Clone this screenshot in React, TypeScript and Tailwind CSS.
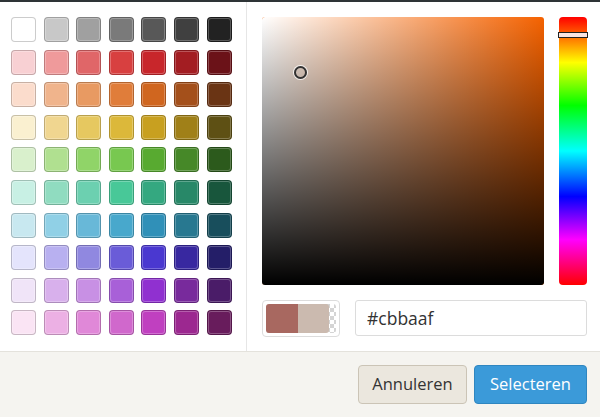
import React from 'react'

const SWATCHES: string[][] = [
	['#ffffff', '#c8c8c8', '#a0a0a0', '#7a7a7a', '#585858', '#404040', '#222222'],
	['#f8d0d3', '#ef9a9b', '#e06668', '#d84040', '#c8262b', '#a31d22', '#6b1218'],
	['#fbdccc', '#f0b48c', '#e89a62', '#e07d3a', '#d0661f', '#a4501b', '#6a3414'],
	['#faf0d0', '#f0d690', '#e6c860', '#dcb83a', '#c8a020', '#a08018', '#5e5014'],
	['#d9f0cc', '#b0e090', '#90d468', '#78c850', '#58aa30', '#468828', '#2c5a1c'],
	['#c8f0e4', '#90dcc0', '#6cd0b0', '#48c898', '#34a880', '#288868', '#18563c'],
	['#c8e8f0', '#90d0e6', '#68b8d8', '#48a8cc', '#3090b8', '#287890', '#184e5c'],
	['#e4e4fc', '#b8b0f0', '#9088e0', '#6a5cd8', '#4a38d0', '#3828a0', '#241e68'],
	['#f0e4f8', '#d8b0ec', '#c890e4', '#a860d8', '#9030d0', '#782a9c', '#4a1c68'],
	['#fae4f4', '#ecb0e4', '#e088d8', '#d068cc', '#c040c0', '#9c2890', '#681c5c']
]

const Palette = () => (
	<div className="w-[247px] shrink-0 border-r border-[#e6e6e6] pl-[11px] pt-[15px]">
		<div className="grid grid-cols-[repeat(7,25px)] gap-[7.6px]">
			{SWATCHES.flat().map((c, i) => (
				<div
					key={i}
					className="h-[25px] w-[25px] rounded-[4px] border border-black/20 shadow-[inset_0_0_0_1px_rgba(255,255,255,0.25)]"
					style={{ backgroundColor: c }}
				/>
			))}
		</div>
	</div>
)

const Picker = () => (
	<div className="flex min-w-0 flex-1 flex-col pl-[15px] pr-[13px] pt-[15px]">
		<div className="flex gap-[15px]">
			{/* verzadiging / helderheid */}
			<div className="relative h-[268px] w-[282px] overflow-hidden rounded-[3px] bg-[hsl(24,100%,48%)]">
				<div className="absolute inset-0 bg-gradient-to-r from-white to-transparent" />
				<div className="absolute inset-0 bg-gradient-to-b from-transparent to-black" />
				<div className="absolute left-[32px] top-[49px] h-[13px] w-[13px] rounded-full border-2 border-[#333] shadow-[0_0_0_1px_rgba(255,255,255,0.8)]" />
			</div>
			{/* tint */}
			<div className="relative h-[268px] w-[28px] rounded-[4px] bg-[linear-gradient(to_bottom,#ff0000_0%,#ffff00_17%,#00ff00_33%,#00ffff_50%,#0000ff_67%,#ff00ff_83%,#ff0000_100%)]">
				<div className="absolute -left-[1px] -right-[1px] top-[15px] h-[6px] border border-[#222] bg-[#f8e4e2]" />
			</div>
		</div>
		<div className="mt-[15px] flex gap-[15px]">
			<div className="h-[37px] w-[78px] shrink-0 rounded-[4px] border border-[#dcdcdc] p-[3px]">
				<div className="flex h-full w-full rounded-[3px] bg-[repeating-conic-gradient(#d4d4d4_0_25%,#ffffff_0_50%)] bg-[length:8px_8px]">
					<div className="w-[32px] rounded-l-[3px] bg-[#a86860]" />
					<div className="w-[31px] rounded-r-[3px] bg-[#cbbaaf]" />
				</div>
			</div>
			<input
				readOnly
				value="#cbbaaf"
				className="h-[36px] w-0 min-w-0 flex-1 rounded-[3px] border border-[#dcdcdc] bg-white pl-[11px] font-['Open_Sans',sans-serif] text-[17.5px] text-[#333] outline-none"
			/>
		</div>
	</div>
)

export default function App() {
	return (
		<div className="h-[417px] w-[600px] overflow-hidden bg-white font-['Open_Sans',sans-serif]">
			<div className="h-[2px] bg-[#2e3436]" />
			<div className="flex h-[349px]">
				<Palette />
				<Picker />
			</div>
			<div className="flex h-[66px] items-center justify-end gap-[7px] border-t border-[#e4e2dc] bg-[#f5f4f0] pr-[13px]">
				<button className="h-[39px] w-[109px] rounded-[4px] border border-[#cbc4b6] bg-[#ebe7de] text-[16.5px] text-[#333]">
					Annuleren
				</button>
				<button className="h-[39px] w-[113px] rounded-[4px] border border-[#2f86c0] bg-[#3b9ad9] text-[16.5px] text-white">
					Selecteren
				</button>
			</div>
		</div>
	)
}
